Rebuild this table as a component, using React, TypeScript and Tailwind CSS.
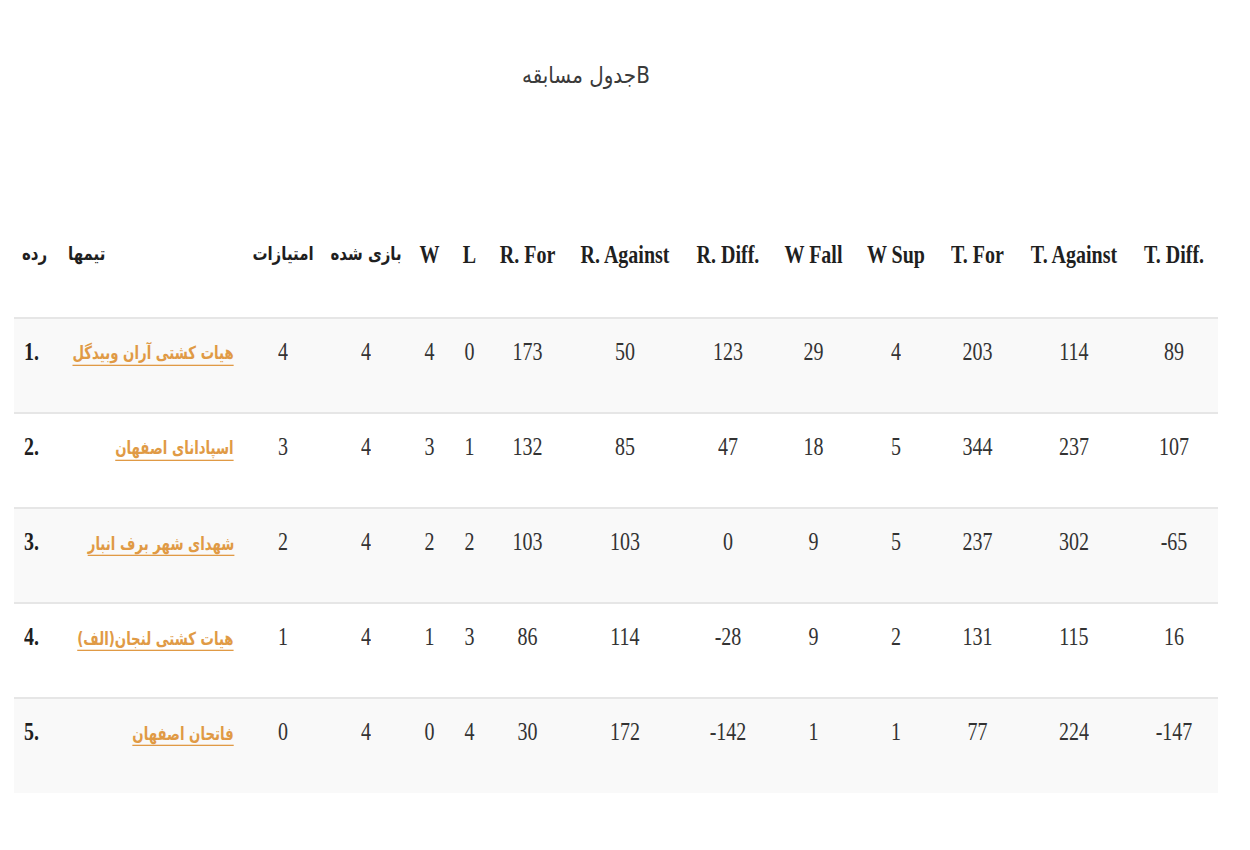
const headers = [
  "امتیازات",
  "بازی شده",
  "W",
  "L",
  "R. For",
  "R. Against",
  "R. Diff.",
  "W Fall",
  "W Sup",
  "T. For",
  "T. Against",
  "T. Diff.",
];

const widths = [44, 185, 80, 86, 41, 39, 77, 118, 88, 83, 82, 81, 112, 88];

const rows = [
  { rank: "1.", team: "هیات کشتی آران وبیدگل", vals: [4, 4, 4, 0, 173, 50, 123, 29, 4, 203, 114, 89] },
  { rank: "2.", team: "اسپادانای اصفهان", vals: [3, 4, 3, 1, 132, 85, 47, 18, 5, 344, 237, 107] },
  { rank: "3.", team: "شهدای شهر برف انبار", vals: [2, 4, 2, 2, 103, 103, 0, 9, 5, 237, 302, -65] },
  { rank: "4.", team: "هیات کشتی لنجان(الف)", vals: [1, 4, 1, 3, 86, 114, -28, 9, 2, 131, 115, 16] },
  { rank: "5.", team: "فاتحان اصفهان", vals: [0, 4, 0, 4, 30, 172, -142, 1, 1, 77, 224, -147] },
];

function Txt({ children }: { children: React.ReactNode }) {
  return <span className="inline-block scale-y-[1.25]">{children}</span>;
}

export default function App() {
  return (
    <div
      className="min-h-[850px] w-[1250px] bg-white pt-[63px] text-[#333]"
      style={{ fontFamily: '"Liberation Serif", "DejaVu Sans", serif' }}
    >
      <div className="pr-[78px] text-center text-[20px] leading-6 text-[#3a3a3a]" style={{ fontFamily: '"DejaVu Sans", "Liberation Sans", sans-serif' }}>
        <span className="inline-block scale-x-[1.05] scale-y-[1.2] text-[19px]">جدول مسابقهB</span>
      </div>

      <div className="mt-[135px] pl-[14px]">
        <table className="w-[1204px] table-fixed border-collapse text-[20px] leading-6">
          <colgroup>
            {widths.map((w, i) => (
              <col key={i} style={{ width: w }} />
            ))}
          </colgroup>
          <thead>
            <tr className="h-[96px] align-top font-bold text-[#1f1f1f]">
              <th className="pl-2 pt-5 text-left text-[15px]" style={{ fontFamily: '"DejaVu Sans", sans-serif' }}>
                <Txt>رده</Txt>
              </th>
              <th className="pl-[10px] pt-5 text-left text-[15px]" style={{ fontFamily: '"DejaVu Sans", sans-serif' }}>
                <Txt>تیمها</Txt>
              </th>
              {headers.map((h, i) => (
                <th
                  key={h}
                  className={`pt-5 text-center ${i < 2 ? "text-[15px]" : ""}`}
                  style={i < 2 ? { fontFamily: '"DejaVu Sans", sans-serif' } : undefined}
                >
                  <Txt>{h}</Txt>
                </th>
              ))}
            </tr>
          </thead>
          <tbody>
            {rows.map((r, idx) => (
              <tr
                key={r.rank}
                className={`h-[95px] border-t-2 border-[#e6e6e6] align-top ${idx % 2 === 0 ? "bg-[#f9f9f9]" : "bg-white"}`}
              >
                <td className="pl-[10px] pt-5 font-bold text-[#1f1f1f]">
                  <Txt>{r.rank}</Txt>
                </td>
                <td className="whitespace-nowrap pr-[9px] pt-5 text-right">
                  <a
                    href="#"
                    dir="rtl"
                    className="inline-block origin-right scale-x-[0.95] scale-y-[1.3] text-[14px] font-semibold text-[#e09a45] underline decoration-1 underline-offset-4"
                    style={{ fontFamily: '"DejaVu Sans", sans-serif' }}
                  >
                    {r.team}
                  </a>
                </td>
                {r.vals.map((v, i) => (
                  <td key={i} className="pt-5 text-center">
                    <Txt>{v}</Txt>
                  </td>
                ))}
              </tr>
            ))}
          </tbody>
        </table>
      </div>
    </div>
  );
}
